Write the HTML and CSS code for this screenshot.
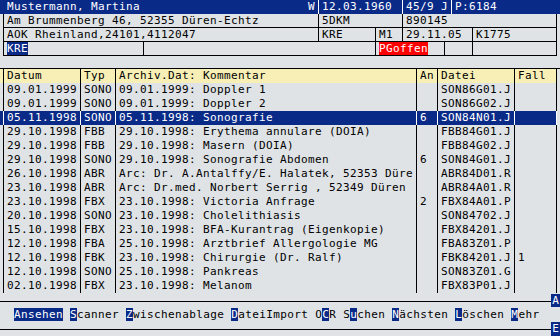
FILE: index.html
```html
<!DOCTYPE html>
<html lang="de">

<head>
    <meta charset="UTF-8">
    <meta name="viewport" content="width=device-width, initial-scale=1.0">
    <title>Archiv</title>

    <link rel="stylesheet" href="styles.css">
</head>

<body>
    <div class="title">
        <div class="cell name"><span>Mustermann, Martina</span><span>W</span></div>
        <div class="cell birth">12.03.1960</div>
        <div class="cell age">45/9 J</div>
        <div class="cell pid">P:6184</div>
    </div>

    <div class="patient">
        <div class="prow">
            <div class="cell w315">Am Brummenberg 46, 52355 Düren-Echtz</div>
            <div class="cell w84">5DKM</div>
            <div class="cell last">890145</div>
        </div>
        <div class="prow">
            <div class="cell w315">AOK Rheinland,24101,4112047</div>
            <div class="cell w57">KRE</div>
            <div class="cell w27">M1</div>
            <div class="cell w70">29.11.05</div>
            <div class="cell last">K1775</div>
        </div>
        <div class="prow">
            <div class="cell w140"><span class="hl">KRE</span></div>
            <div class="cell w232"></div>
            <div class="cell w69"><span class="flag">PGoffen</span></div>
            <div class="cell w28"></div>
            <div class="cell last"></div>
        </div>
    </div>

    <div class="gap"></div>

    <div class="list">
        <div class="lrow head">
            <span class="c-date">Datum</span><span class="c-typ">Typ</span><span class="c-note">Archiv.Dat: Kommentar</span><span class="c-an">An</span><span class="c-file">Datei</span><span class="c-fall">Fall</span>
        </div>
        <div class="lrow">
            <span class="c-date">09.01.1999</span><span class="c-typ">SONO</span><span class="c-note">09.01.1999: Doppler 1</span><span class="c-an"></span><span class="c-file">SON86G01.J</span><span class="c-fall"></span>
        </div>
        <div class="lrow">
            <span class="c-date">09.01.1999</span><span class="c-typ">SONO</span><span class="c-note">09.01.1999: Doppler 2</span><span class="c-an"></span><span class="c-file">SON86G02.J</span><span class="c-fall"></span>
        </div>
        <div class="lrow sel">
            <span class="c-date">05.11.1998</span><span class="c-typ">SONO</span><span class="c-note">05.11.1998: Sonografie</span><span class="c-an">6</span><span class="c-file">SON84N01.J</span><span class="c-fall"></span>
        </div>
        <div class="lrow">
            <span class="c-date">29.10.1998</span><span class="c-typ">FBB</span><span class="c-note">29.10.1998: Erythema annulare (DOIA)</span><span class="c-an"></span><span class="c-file">FBB84G01.J</span><span class="c-fall"></span>
        </div>
        <div class="lrow">
            <span class="c-date">29.10.1998</span><span class="c-typ">FBB</span><span class="c-note">29.10.1998: Masern (DOIA)</span><span class="c-an"></span><span class="c-file">FBB84G02.J</span><span class="c-fall"></span>
        </div>
        <div class="lrow">
            <span class="c-date">29.10.1998</span><span class="c-typ">SONO</span><span class="c-note">29.10.1998: Sonografie Abdomen</span><span class="c-an">6</span><span class="c-file">SON84G01.J</span><span class="c-fall"></span>
        </div>
        <div class="lrow">
            <span class="c-date">26.10.1998</span><span class="c-typ">ABR</span><span class="c-note">Arc: Dr. A.Antalffy/E. Halatek, 52353 Düre</span><span class="c-an"></span><span class="c-file">ABR84D01.R</span><span class="c-fall"></span>
        </div>
        <div class="lrow">
            <span class="c-date">23.10.1998</span><span class="c-typ">ABR</span><span class="c-note">Arc: Dr.med. Norbert Serrig , 52349 Düren</span><span class="c-an"></span><span class="c-file">ABR84A01.R</span><span class="c-fall"></span>
        </div>
        <div class="lrow">
            <span class="c-date">23.10.1998</span><span class="c-typ">FBX</span><span class="c-note">23.10.1998: Victoria Anfrage</span><span class="c-an">2</span><span class="c-file">FBX84A01.P</span><span class="c-fall"></span>
        </div>
        <div class="lrow">
            <span class="c-date">20.10.1998</span><span class="c-typ">SONO</span><span class="c-note">23.10.1998: Cholelithiasis</span><span class="c-an"></span><span class="c-file">SON84702.J</span><span class="c-fall"></span>
        </div>
        <div class="lrow">
            <span class="c-date">15.10.1998</span><span class="c-typ">FBX</span><span class="c-note">23.10.1998: BFA-Kurantrag (Eigenkopie)</span><span class="c-an"></span><span class="c-file">FBX84201.J</span><span class="c-fall"></span>
        </div>
        <div class="lrow">
            <span class="c-date">12.10.1998</span><span class="c-typ">FBA</span><span class="c-note">25.10.1998: Arztbrief Allergologie MG</span><span class="c-an"></span><span class="c-file">FBA83Z01.P</span><span class="c-fall"></span>
        </div>
        <div class="lrow">
            <span class="c-date">12.10.1998</span><span class="c-typ">FBK</span><span class="c-note">23.10.1998: Chirurgie (Dr. Ralf)</span><span class="c-an"></span><span class="c-file">FBK84201.J</span><span class="c-fall">1</span>
        </div>
        <div class="lrow">
            <span class="c-date">12.10.1998</span><span class="c-typ">SONO</span><span class="c-note">25.10.1998: Pankreas</span><span class="c-an"></span><span class="c-file">SON83Z01.G</span><span class="c-fall"></span>
        </div>
        <div class="lrow">
            <span class="c-date">02.10.1998</span><span class="c-typ">FBX</span><span class="c-note">23.10.1998: Melanom</span><span class="c-an"></span><span class="c-file">FBX83P01.J</span><span class="c-fall"></span>
        </div>
    </div>

    <div class="rule upper"><i class="line"></i><span class="key">A</span></div>

    <div class="menu"><span class="hl">Ansehen</span> <span class="hl">S</span>canner <span class="hl">Z</span>wischenablage <span class="hl">D</span>ateiImport O<span class="hl">C</span>R S<span class="hl">u</span>chen <span class="hl">N</span>ächsten <span class="hl">L</span>öschen <span class="hl">M</span>ehr</div>

    <div class="rule lower"><i class="line"></i><span class="key">E</span></div>
</body>

</html>
```

FILE: styles.css
```css
* {
    box-sizing: border-box;
}

body {
    margin: 0;
    width: 560px;
    height: 336px;
    overflow: hidden;
    background: #dfe3e6;
    color: #000;
    font-family: 'DejaVu Sans Mono', monospace;
    font-size: 11px;
    letter-spacing: 0.38px;
    line-height: 14px;
}

.hl {
    background: #0a2a88;
    color: #fff;
}

.flag {
    background: #ff0000;
    color: #fff;
}

/* title bar */

.title {
    display: flex;
    height: 14px;
    background: #0a2a88;
    color: #fff;
}

.title .cell {
    border-left: 1px solid #fff;
    padding-left: 3px;
    white-space: pre;
}

.title .name {
    display: flex;
    justify-content: space-between;
    width: 318px;
    padding: 0 3px 0 7px;
    border-left: 0;
}

.title .birth { width: 84px; }
.title .age { width: 49px; }
.title .pid { flex: 1; }

/* patient box */

.patient {
    margin-left: 3px;
    width: 554px;
}

.prow {
    display: flex;
    height: 14px;
    border-bottom: 1px solid #000;
}

.prow .cell {
    border-left: 1px solid #000;
    padding-left: 3px;
    white-space: pre;
}

.prow .last {
    flex: 1;
    border-right: 1px solid #000;
}

.w315 { width: 315px; }
.w84 { width: 84px; }
.w57 { width: 57px; }
.w27 { width: 27px; }
.w70 { width: 70px; }
.w140 { width: 140px; }
.w232 { width: 232px; }
.w69 { width: 69px; }
.w28 { width: 28px; }

.gap {
    height: 13px;
    border-bottom: 1px solid #000;
}

/* document list */

.lrow {
    display: flex;
    width: 557px;
    height: 14px;
    padding-left: 3px;
}

.lrow span {
    border-left: 1px solid #000;
    padding-left: 3px;
    white-space: pre;
    overflow: hidden;
}

.lrow.head {
    background: #f7efb6;
}

.lrow.sel {
    background: #0a2a88;
    color: #fff;
}

.lrow.sel span {
    border-color: #fff;
}

.c-date { width: 77px; }
.c-typ { width: 35px; }
.c-note { width: 301px; }
.c-an { width: 21px; }
.c-file { width: 77px; }

.lrow .c-fall {
    width: 43px;
    border-right: 1px solid #000;
}

/* function keys */

.rule {
    display: flex;
}

.rule .line {
    flex: 1;
    border-bottom: 1px solid #000;
}

.rule .key {
    width: 9px;
    background: #0a2a88;
    color: #fff;
    text-align: center;
    letter-spacing: 0;
}

.rule.upper { height: 15px; }
.rule.upper .line { height: 9px; }
.rule.upper .key { margin-top: 1px; height: 13px; line-height: 13px; }

.rule.lower { height: 14px; }
.rule.lower .line { height: 8px; }
.rule.lower .key { height: 14px; }

.menu {
    height: 14px;
    padding-left: 14px;
    white-space: pre;
}
```
